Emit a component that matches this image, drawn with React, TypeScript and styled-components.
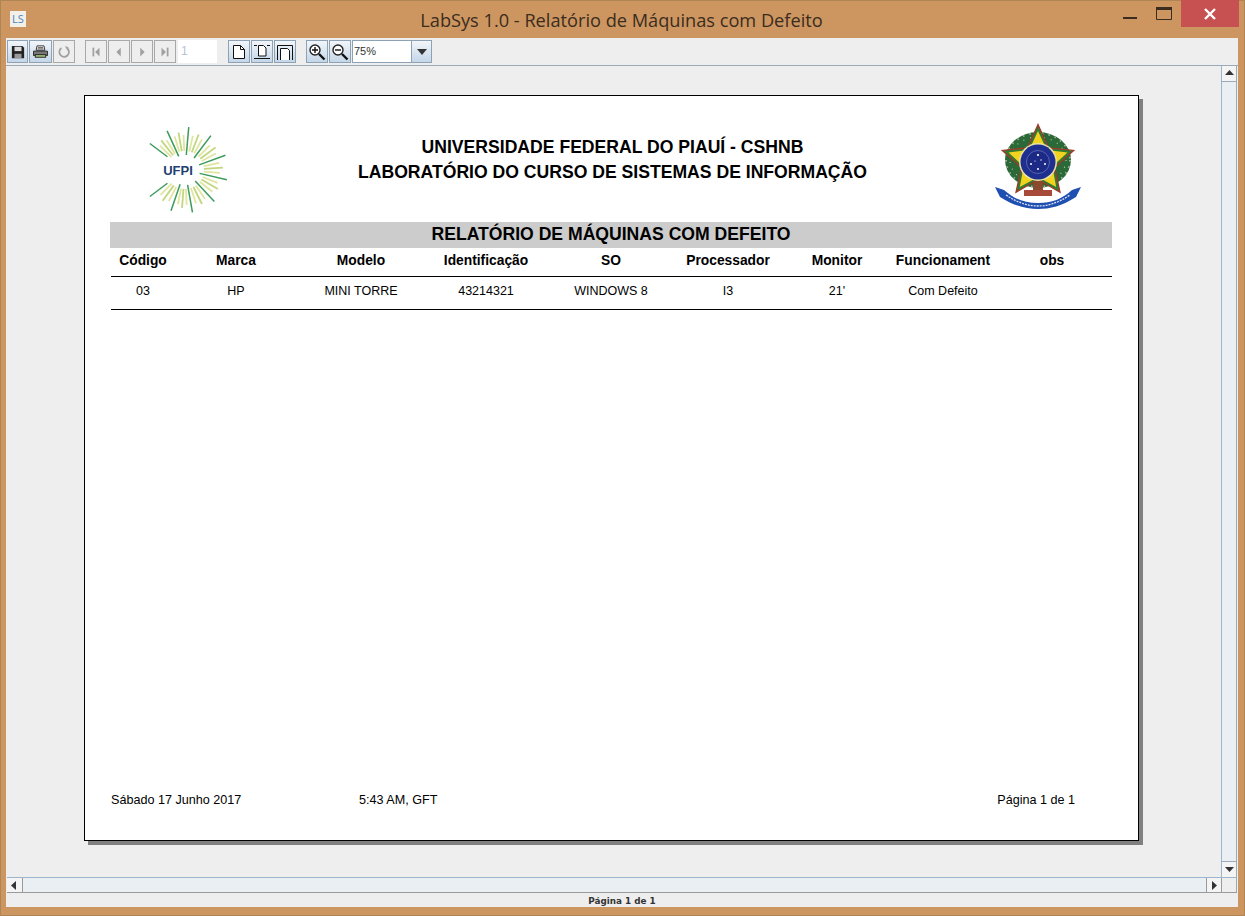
import React from "react";
import styled, { createGlobalStyle } from "styled-components";

const Global = createGlobalStyle`
  html, body { margin: 0; padding: 0; background: #cd9660; }
  #root { width: 1245px; height: 916px; overflow: hidden; }
  * { box-sizing: border-box; }
`;

const Win = styled.div`
  width: 1245px; height: 916px; background: #cd9660; box-shadow: inset 0 0 0 1px #b08556;
  display: flex; flex-direction: column; font-family: "Liberation Sans", Arial, sans-serif;
`;
const TitleBar = styled.div`
  height: 38px; flex: none; display: flex; align-items: flex-start; padding-left: 10px;
`;
const AppIcon = styled.div`
  width: 16px; height: 16px; margin-top: 11px; background: #f3f0ea; color: #4a86c0;
  font: 11px/16px "Open Sans", sans-serif; text-align: center;
`;
const TitleText = styled.div`
  flex: 1; text-align: center; font: 18.2px/24px "Open Sans", sans-serif; color: #3a2c1e; margin-top: 8px; padding-left: 103px;
`;
const Controls = styled.div`
  display: flex; align-items: flex-start; margin-right: 6px;
`;
const CtlBtn = styled.div<{ $w: number }>`
  width: ${p => p.$w}px; height: 27px; display: flex; align-items: center; justify-content: center;
`;
const CloseBtn = styled(CtlBtn)` background: #c75050; `;
const Body = styled.div`
  flex: 1; min-height: 0; margin: 0 7px 9px 6px; background: #eeeeee; display: flex; flex-direction: column;
`;
const Toolbar = styled.div`
  height: 28px; flex: none; display: flex; align-items: center; padding-left: 1px; border-bottom: 1px solid #9aaab8;
`;
const Group = styled.div<{ $ml?: number }>`
  display: flex; gap: 1px; margin-left: ${p => p.$ml ?? 0}px; align-items: center;
`;
const TBtn = styled.div<{ $dis?: boolean; $w?: number }>`
  width: ${p => p.$w ?? 22}px; height: 23px; display: flex; align-items: center; justify-content: center;
  border: 1px solid ${p => (p.$dis ? "#a8a8a8" : "#8ea2b6")};
  background: ${p => (p.$dis ? "#eeeeee" : "linear-gradient(#f2f6fa, #c4d6e8)")};
`;
const PageBox = styled.div`
  width: 39px; height: 23px; margin-left: 1px; background: #fff; color: #b4c4d4; font: 12px/23px "Liberation Sans", sans-serif; padding-left: 3px;
`;
const Combo = styled.div`
  width: 80px; height: 23px; display: flex; border: 1px solid #8ea2b6; background: #fff;
`;
const ComboText = styled.div`
  flex: 1; font: 11px/21px "Liberation Sans", sans-serif; color: #333; padding-left: 1px;
`;
const ComboArrow = styled.div`
  width: 20px; display: flex; align-items: center; justify-content: center; border-left: 1px solid #8ea2b6;
  background: linear-gradient(#f2f6fa, #c4d6e8);
`;
const Middle = styled.div` flex: 1; min-height: 0; display: flex; `;
const Scroller = styled.div`
  flex: 1; min-width: 0; padding: 29px 0 0 78px; border-right: 1px solid #9cb4cc;
`;
const Page = styled.div`
  width: 1055px; height: 746px; background: #fff; border: 1px solid #000; box-shadow: 4px 4px 0 #808080;
  display: flex; flex-direction: column; padding: 26px 26px 0 25px; color: #000;
`;
const Header = styled.div`
  height: 100px; flex: none; display: grid; grid-template-columns: 110px 1fr 118px; align-items: start;
`;
const LogoSlot = styled.div` padding: 3px 0 0 25px; `;
const Titles = styled.div`
  text-align: center; font-weight: 700; font-size: 17.6px; line-height: 25px; padding: 13px 0 0 11px;
`;
const Band = styled.div`
  height: 26px; background: #cccccc; font: 700 17.6px/24px "Liberation Sans", sans-serif; text-align: center;
`;
const Cols = "64px 122px 128px 122px 128px 106px 112px 100px 118px";
const HeadRow = styled.div`
  display: grid; grid-template-columns: ${Cols}; margin-left: 1px; height: 29px; border-bottom: 1px solid #000;
  font: 700 13.8px/26px "Liberation Sans", sans-serif; text-align: center;
`;
const DataRow = styled.div`
  display: grid; grid-template-columns: ${Cols}; margin-left: 1px; height: 33px; border-bottom: 1px solid #000;
  font: 12.5px/29px "Liberation Sans", sans-serif; text-align: center;
`;
const Footer = styled.div`
  margin-top: auto; height: 48px; margin-left: 1px; display: flex; font: 12.6px/16px "Liberation Sans", sans-serif;
`;
const FDate = styled.div` width: 248px; `;
const FTime = styled.div` flex: 1; `;
const FPage = styled.div` margin-right: 37px; `;
const VBar = styled.div`
  width: 15px; flex: none; display: flex; flex-direction: column; background: #e8edf2; margin-right: 1px; border-right: 1px solid #9aaab8;
`;
const ArrowBtn = styled.div`
  width: 14px; height: 15px; flex: none; background: #f4f4f4; display: flex; align-items: center; justify-content: center;
`;
const VTrack = styled.div` flex: 1; border-top: 1px solid #9aaab8; border-bottom: 1px solid #9aaab8; background: #eaeff4; `;
const HBarRow = styled.div` height: 16px; flex: none; display: flex; border-top: 1px solid #9cb4cc; border-bottom: 1px solid #9a9a9a; margin: 0 1px; `;
const HArrow = styled.div`
  width: 16px; height: 14px; flex: none; background: #f4f4f4; display: flex; align-items: center; justify-content: center; border-right: 1px solid #9a9a9a;
`;
const HArrowR = styled(HArrow)` border-left: 1px solid #9a9a9a; `;
const HTrack = styled.div` flex: 1; background: #eaeff4; `;
const Corner = styled.div` width: 15px; flex: none; background: #eeeeee; border-right: 1px solid #9aaab8; `;
const Status = styled.div`
  height: 14px; flex: none; text-align: center; font: 700 8.8px/17px "DejaVu Sans", sans-serif; color: #333;
`;

const I = { width: 16, height: 16, viewBox: "0 0 16 16" };
const N = { width: 14, height: 14, viewBox: "0 0 16 16" };
const Dark = "#111";
const Gray = "#a0a0a0";

const SaveIcon = () => (
  <svg width="14" height="14" viewBox="0 0 16 16"><path d="M1 1h12l2 2v12H1z" fill="#222" /><rect x="4" y="2" width="8" height="5" fill="#ddd" /><rect x="4" y="10" width="8" height="5" fill="#999" /></svg>
);
const PrintIcon = () => (
  <svg width="17" height="14" viewBox="0 0 18 16">
    <path d="M5 1h8l1 5H4z" fill="#fff" stroke="#222" />
    <path d="M1 7h16v5H1z" fill="#777" stroke="#222" />
    <rect x="3" y="11" width="12" height="3" fill="#9cb878" stroke="#222" />
    <path d="M6 3h6M5.5 4.5h7" stroke="#444" />
  </svg>
);
const ReloadIcon = () => (
  <svg width="14" height="14" viewBox="0 0 16 16" fill="none"><path d="M5 3.5A5.5 5.5 0 1 0 12 4" stroke={Gray} strokeWidth="2" /><path d="M9 1l4 1.5-1 4z" fill={Gray} /></svg>
);
const First = () => <svg {...N}><rect x="4" y="3" width="2" height="10" fill={Gray} /><path d="M12 3v10L7 8z" fill={Gray} /></svg>;
const Prev = () => <svg {...N}><path d="M10 3v10L5 8z" fill={Gray} /></svg>;
const Next = () => <svg {...N}><path d="M6 3v10l5-5z" fill={Gray} /></svg>;
const Last = () => <svg {...N}><rect x="10" y="3" width="2" height="10" fill={Gray} /><path d="M4 3v10l5-5z" fill={Gray} /></svg>;
const Doc1 = () => <svg {...I} fill="#fff" stroke={Dark}><path d="M2.5 1.5h7l4 4v9h-11z" /><path d="M9.5 1.5v4h4" fill="none" /></svg>;
const Doc2 = () => (
  <svg {...I} fill="#fff" stroke={Dark}><path d="M4.5 1.5h5l2.5 2.5v8h-7.5z" /><path d="M0 14.5h16M0 1.5h3M13 1.5h3" fill="none" /></svg>
);
const Doc3 = () => (
  <svg {...I} fill="none" stroke={Dark}><path d="M.5 16V1.5h15V16" /><path d="M3.5 16V4.5h7l2 2V16" fill="#fff" /></svg>
);
const ZoomIcon = ({ plus }: { plus?: boolean }) => (
  <svg width="18" height="18" viewBox="0 0 18 18" fill="none">
    <circle cx="7" cy="7" r="5" fill="#fff" stroke="#222" strokeWidth="1.4" />
    <path d="M11 11l5.5 5.5" stroke="#111" strokeWidth="2.4" />
    <path d={plus ? "M4 7h6M7 4v6" : "M4 7h6"} stroke="#111" strokeWidth="1.4" />
  </svg>
);
const Tri = ({ d }: { d: "u" | "d" | "l" | "r" }) => {
  const p = { u: "M1 7l4.5-5 4.5 5z", d: "M1 3l4.5 5 4.5-5z", l: "M7 1L2 5.5 7 10z", r: "M3 1l5 4.5L3 10z" }[d];
  return <svg width="11" height="11" viewBox="0 0 11 11"><path d={p} fill="#333" /></svg>;
};

const UfpiLogo = () => {
  const rays: React.ReactNode[] = [];
  const strongAngles = [-143, -114.6, -85, -53, -20, 13, 47, 80, 109, 143];
  strongAngles.forEach((a, i) => {
    const r = (a * Math.PI) / 180;
    const [r1, r2] = a === -143 || a === 143 ? [22, 44] : [15, 43];
    rays.push(
      <line key={`s${i}`} x1={50 + r1 * Math.cos(r)} y1={45 + r1 * Math.sin(r)} x2={50 + r2 * Math.cos(r)} y2={45 + r2 * Math.sin(r)}
        stroke="#3d9a5c" strokeWidth="1.5" />
    );
    if (i < strongAngles.length - 1) {
      const next = strongAngles[i + 1];
      [0.25, 0.5, 0.75].forEach((f, j) => {
        const t = ((a + (next - a) * f) * Math.PI) / 180;
        const outer = j === 1 ? 38 : 35;
        rays.push(
          <line key={`l${i}-${j}`} x1={50 + 19 * Math.cos(t)} y1={45 + 19 * Math.sin(t)} x2={50 + outer * Math.cos(t)} y2={45 + outer * Math.sin(t)}
            stroke={j === 1 ? "#c2d67f" : "#dfe6a0"} strokeWidth="1.8" />
        );
      });
    }
  });
  return (
    <svg width="100" height="90" viewBox="0 0 100 90">
      {rays}
      <text x="43" y="50" fontFamily="Liberation Sans" fontWeight="700" fontSize="13" fill="#1f3f72" textAnchor="middle">UFPI</text>
    </svg>
  );
};

const star = (cx: number, cy: number, R: number, r: number) => {
  const pts: string[] = [];
  for (let i = 0; i < 10; i++) {
    const a = -Math.PI / 2 + (i * Math.PI) / 5;
    const d = i % 2 ? r : R;
    pts.push(`${(cx + d * Math.cos(a)).toFixed(1)},${(cy + d * Math.sin(a)).toFixed(1)}`);
  }
  return pts.join(" ");
};

const Crest = () => (
  <svg width="90" height="90" viewBox="0 0 90 90">
    <ellipse cx="44" cy="38" rx="33" ry="28" fill="#2b6a38" />
    <ellipse cx="44" cy="38" rx="32" ry="27" fill="none" stroke="#9fb39a" strokeWidth="2" strokeDasharray="1.5 5" />
    <ellipse cx="44" cy="38" rx="28" ry="23" fill="none" stroke="#b6c4ae" strokeWidth="1.2" strokeDasharray="1 6" />
    <rect x="39" y="58" width="10" height="14" fill="#8a4a2e" />
    <path d="M30 68h28v6H30z" fill="#a84a3a" />
    <polygon points={star(44, 40, 37.5, 17.5)} fill="#2e7d32" stroke="#a3372a" strokeWidth="1.3" />
    <polygon points={star(44, 40, 31, 15)} fill="#f2d21f" />
    <circle cx="44" cy="40" r="19" fill="#e8e2a8" />
    <circle cx="44" cy="40" r="17.5" fill="#1f2f8f" />
    <circle cx="44" cy="40" r="11.5" fill="#1c2a86" stroke="#7c88cc" strokeWidth=".6" />
    <g fill="#fff"><circle cx="44" cy="33" r="1.1" /><circle cx="37" cy="42" r="1" /><circle cx="51" cy="42" r="1" /><circle cx="44" cy="47" r="1" /><circle cx="47" cy="38" r=".7" /><circle cx="41" cy="39" r=".6" /></g>
    <path d="M1 65 L10 68 C20 77 30 81 44 81 C58 81 68 77 78 68 L87 65 L82 75 C68 84 56 87 44 87 C32 87 20 84 6 75z" fill="#1f4fb0" />
    <path d="M12 73 C24 81 34 84 44 84 C54 84 64 81 76 73" stroke="#dbe2f5" strokeWidth="1.3" strokeDasharray="2 1" fill="none" />
  </svg>
);

const columns = ["Código", "Marca", "Modelo", "Identificação", "SO", "Processador", "Monitor", "Funcionament", "obs"];
const row = ["03", "HP", "MINI TORRE", "43214321", "WINDOWS 8", "I3", "21'", "Com Defeito", ""];

export default function App() {
  return (
    <Win>
      <Global />
      <TitleBar>
        <AppIcon>LS</AppIcon>
        <TitleText>LabSys 1.0 - Relatório de Máquinas com Defeito</TitleText>
        <Controls>
          <CtlBtn $w={32}><svg width="16" height="16" viewBox="0 0 16 16"><rect x="1" y="11" width="14" height="2" fill="#3a2c1e" /></svg></CtlBtn>
          <CtlBtn $w={35}><svg width="16" height="14" viewBox="0 0 16 14"><path d="M.5 1.5h15v11H.5z" fill="none" stroke="#3a2c1e" /><rect y="0" width="16" height="3" fill="#3a2c1e" /></svg></CtlBtn>
          <CloseBtn $w={58}><svg width="14" height="14" viewBox="0 0 14 14"><path d="M2 2l10 10M12 2L2 12" stroke="#fff" strokeWidth="2.4" /></svg></CloseBtn>
        </Controls>
      </TitleBar>
      <Body>
        <Toolbar>
          <Group>
            <TBtn $w={21}><SaveIcon /></TBtn>
            <TBtn $w={23}><PrintIcon /></TBtn>
            <TBtn $dis><ReloadIcon /></TBtn>
          </Group>
          <Group $ml={10}>
            <TBtn $dis><First /></TBtn>
            <TBtn $dis><Prev /></TBtn>
            <TBtn $dis><Next /></TBtn>
            <TBtn $dis><Last /></TBtn>
            <PageBox>1</PageBox>
          </Group>
          <Group $ml={11}>
            <TBtn><Doc1 /></TBtn>
            <TBtn><Doc2 /></TBtn>
            <TBtn><Doc3 /></TBtn>
          </Group>
          <Group $ml={10}>
            <TBtn><ZoomIcon plus /></TBtn>
            <TBtn><ZoomIcon /></TBtn>
            <Combo>
              <ComboText>75%</ComboText>
              <ComboArrow><svg width="12" height="8" viewBox="0 0 12 8"><path d="M1 1h10L6 7z" fill="#333" /></svg></ComboArrow>
            </Combo>
          </Group>
        </Toolbar>
        <Middle>
          <Scroller>
            <Page>
              <Header>
                <LogoSlot><UfpiLogo /></LogoSlot>
                <Titles>
                  <div>UNIVERSIDADE FEDERAL DO PIAUÍ - CSHNB</div>
                  <div>LABORATÓRIO DO CURSO DE SISTEMAS DE INFORMAÇÃO</div>
                </Titles>
                <Crest />
              </Header>
              <Band>RELATÓRIO DE MÁQUINAS COM DEFEITO</Band>
              <HeadRow>{columns.map(c => <div key={c}>{c}</div>)}</HeadRow>
              <DataRow>{row.map((c, i) => <div key={i}>{c}</div>)}</DataRow>
              <Footer>
                <FDate>Sábado 17 Junho 2017</FDate>
                <FTime>5:43 AM, GFT</FTime>
                <FPage>Página 1 de 1</FPage>
              </Footer>
            </Page>
          </Scroller>
          <VBar>
            <ArrowBtn><Tri d="u" /></ArrowBtn>
            <VTrack />
            <ArrowBtn><Tri d="d" /></ArrowBtn>
          </VBar>
        </Middle>
        <HBarRow>
          <HArrow><Tri d="l" /></HArrow>
          <HTrack />
          <HArrowR><Tri d="r" /></HArrowR>
          <Corner />
        </HBarRow>
        <Status>Página 1 de 1</Status>
      </Body>
    </Win>
  );
}
